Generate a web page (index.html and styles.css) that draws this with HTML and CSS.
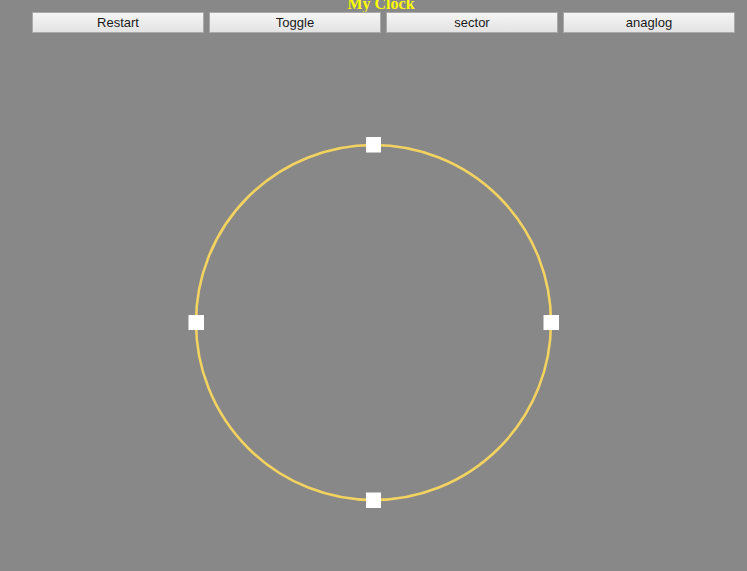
FILE: index.html
```html
<!DOCTYPE html>
<html>
<head>
<meta charset="utf-8">
<title>My Clock</title>
<link rel="stylesheet" href="styles.css">
</head>
<body>
<div class="title">My Clock</div>
<div class="toolbar">
  <button class="btn">Restart</button>
  <button class="btn">Toggle</button>
  <button class="btn">sector</button>
  <button class="btn">anaglog</button>
</div>
<svg class="clock" width="747" height="538" viewBox="0 33 747 538">
  <circle cx="373.5" cy="322.5" r="177.5" fill="none" stroke="#f2d260" stroke-width="2.6"/>
  <rect x="366" y="137" width="15" height="15.5" fill="#fff"/>
  <rect x="188.5" y="315" width="15.5" height="15" fill="#fff"/>
  <rect x="543.5" y="315" width="15.5" height="15" fill="#fff"/>
  <rect x="366" y="492.5" width="15" height="15.5" fill="#fff"/>
</svg>
</body>
</html>
```
FILE: styles.css
```css
html, body {
  margin: 0;
  padding: 0;
  background: #888888;
  overflow: hidden;
}
.title {
  margin-top: -4px;
  height: 16px;
  line-height: 16px;
  padding: 0 12px 0 27px;
  text-align: center;
  font-family: "Liberation Serif", serif;
  font-weight: bold;
  font-size: 16px;
  color: #ffff00;
}
.toolbar {
  display: flex;
  gap: 5px;
  margin-top: 0;
  padding-left: 32px;
}
.btn {
  box-sizing: border-box;
  width: 172px;
  height: 21px;
  margin: 0;
  padding: 0;
  border: 1px solid #a9a9a9;
  border-radius: 0;
  background: linear-gradient(#f5f5f5, #e3e3e3);
  font-family: "Liberation Sans", Arial, sans-serif;
  font-size: 13px;
  color: #1a1a1a;
}
.clock {
  display: block;
}
```
